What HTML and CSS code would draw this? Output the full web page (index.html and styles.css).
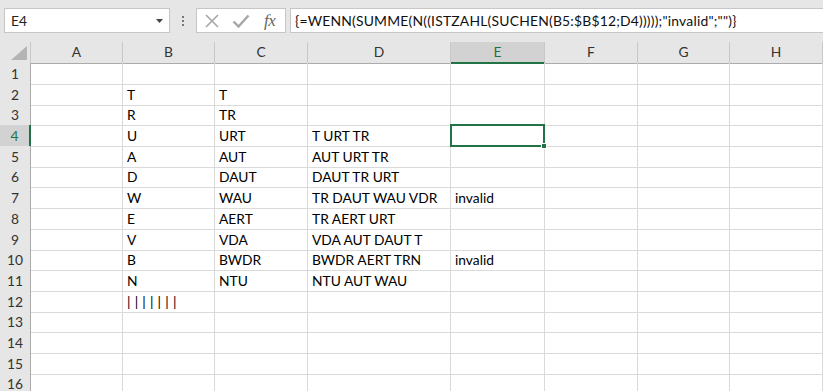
FILE: index.html
```html
<!DOCTYPE html>
<html>
<head>
<meta charset="utf-8">
<link rel="stylesheet" href="styles.css">
</head>
<body>
<div class="app">
  <div class="toolbar">
    <div class="namebox">
      <span class="name">E4</span>
      <svg class="caret" width="8" height="5" viewBox="0 0 8 5"><path d="M0 0h7L3.5 4z" fill="#444"/></svg>
    </div>
    <div class="grip"><span></span><span></span><span></span></div>
    <div class="btnbox">
      <svg class="ico" width="16" height="16" viewBox="0 0 16 16"><path d="M2 2L14 14M14 2L2 14" stroke="#a6a6a6" stroke-width="1.6" fill="none"/></svg>
      <svg class="ico" width="18" height="16" viewBox="0 0 18 16"><path d="M1.5 8.5L6.5 13.5L16.5 2.5" stroke="#a6a6a6" stroke-width="2.4" fill="none"/></svg>
      <span class="fx">fx</span>
    </div>
    <div class="formula">{=WENN(SUMME(N((ISTZAHL(SUCHEN(B5:$B$12;D4)))));"invalid";"")}</div>
  </div>

  <div class="sheet">
    <div class="row head">
      <div class="corner"><svg width="16" height="14" viewBox="0 0 16 14"><path d="M16 0V14H0z" fill="#b4b4b4"/></svg></div>
      <div class="ch">A</div><div class="ch">B</div><div class="ch">C</div><div class="ch">D</div><div class="ch sel">E</div><div class="ch">F</div><div class="ch">G</div><div class="ch">H</div>
    </div>
    <div class="row"><div class="rh">1</div><div class="c"></div><div class="c"></div><div class="c"></div><div class="c"></div><div class="c"></div><div class="c"></div><div class="c"></div><div class="c"></div></div>
    <div class="row"><div class="rh">2</div><div class="c"></div><div class="c">T</div><div class="c">T</div><div class="c"></div><div class="c"></div><div class="c"></div><div class="c"></div><div class="c"></div></div>
    <div class="row"><div class="rh">3</div><div class="c"></div><div class="c">R</div><div class="c">TR</div><div class="c"></div><div class="c"></div><div class="c"></div><div class="c"></div><div class="c"></div></div>
    <div class="row"><div class="rh sel">4</div><div class="c"></div><div class="c">U</div><div class="c">URT</div><div class="c">T URT TR</div><div class="c active"><span class="handle"></span></div><div class="c"></div><div class="c"></div><div class="c"></div></div>
    <div class="row"><div class="rh">5</div><div class="c"></div><div class="c">A</div><div class="c">AUT</div><div class="c">AUT URT TR</div><div class="c"></div><div class="c"></div><div class="c"></div><div class="c"></div></div>
    <div class="row"><div class="rh">6</div><div class="c"></div><div class="c">D</div><div class="c">DAUT</div><div class="c">DAUT TR URT</div><div class="c"></div><div class="c"></div><div class="c"></div><div class="c"></div></div>
    <div class="row"><div class="rh">7</div><div class="c"></div><div class="c">W</div><div class="c">WAU</div><div class="c">TR DAUT WAU VDR</div><div class="c">invalid</div><div class="c"></div><div class="c"></div><div class="c"></div></div>
    <div class="row"><div class="rh">8</div><div class="c"></div><div class="c">E</div><div class="c">AERT</div><div class="c">TR AERT URT</div><div class="c"></div><div class="c"></div><div class="c"></div><div class="c"></div></div>
    <div class="row"><div class="rh">9</div><div class="c"></div><div class="c">V</div><div class="c">VDA</div><div class="c">VDA AUT DAUT T</div><div class="c"></div><div class="c"></div><div class="c"></div><div class="c"></div></div>
    <div class="row"><div class="rh">10</div><div class="c"></div><div class="c">B</div><div class="c">BWDR</div><div class="c">BWDR AERT TRN</div><div class="c">invalid</div><div class="c"></div><div class="c"></div><div class="c"></div></div>
    <div class="row"><div class="rh">11</div><div class="c"></div><div class="c">N</div><div class="c">NTU</div><div class="c">NTU AUT WAU</div><div class="c"></div><div class="c"></div><div class="c"></div><div class="c"></div></div>
    <div class="row"><div class="rh">12</div><div class="c"></div><div class="c bars">|||||||</div><div class="c"></div><div class="c"></div><div class="c"></div><div class="c"></div><div class="c"></div><div class="c"></div></div>
    <div class="row"><div class="rh">13</div><div class="c"></div><div class="c"></div><div class="c"></div><div class="c"></div><div class="c"></div><div class="c"></div><div class="c"></div><div class="c"></div></div>
    <div class="row"><div class="rh">14</div><div class="c"></div><div class="c"></div><div class="c"></div><div class="c"></div><div class="c"></div><div class="c"></div><div class="c"></div><div class="c"></div></div>
    <div class="row"><div class="rh">15</div><div class="c"></div><div class="c"></div><div class="c"></div><div class="c"></div><div class="c"></div><div class="c"></div><div class="c"></div><div class="c"></div></div>
    <div class="row"><div class="rh">16</div><div class="c"></div><div class="c"></div><div class="c"></div><div class="c"></div><div class="c"></div><div class="c"></div><div class="c"></div><div class="c"></div></div>
  </div>
</div>
</body>
</html>
```

FILE: styles.css
```css
* { box-sizing: border-box; }
html, body { margin: 0; padding: 0; }
body {
  width: 823px;
  height: 391px;
  overflow: hidden;
  background: #fff;
  font-family: Lato, "Open Sans", sans-serif;
  color: #000;
}
.app { width: 823px; height: 391px; overflow: hidden; }

.toolbar {
  height: 42px;
  background: #e6e6e6;
  display: flex;
  align-items: flex-start;
  padding: 8px 0 0 4px;
  white-space: nowrap;
}
.namebox {
  width: 166px;
  height: 25px;
  background: #fff;
  border: 1px solid #c6c6c6;
  display: flex;
  align-items: center;
  justify-content: space-between;
  padding: 0 5px 0 6px;
  font-size: 13.8px;
  color: #222;
}
.caret { margin-top: 1px; }
.grip {
  width: 26px;
  height: 25px;
  display: flex;
  flex-direction: column;
  align-items: center;
  justify-content: center;
  gap: 2px;
}
.grip span { width: 2px; height: 2px; background: #777; }
.btnbox {
  width: 90px;
  height: 25px;
  background: #fff;
  border: 1px solid #c6c6c6;
  display: flex;
  align-items: center;
  padding: 0 0 0 7px;
  gap: 12px;
}
.fx {
  font-family: "Liberation Serif", serif;
  font-style: italic;
  font-size: 17px;
  color: #666;
  margin-left: 2px;
  letter-spacing: -0.5px;
}
.formula {
  margin-left: 4px;
  flex: 1;
  height: 25px;
  background: #fff;
  border: 1px solid #c6c6c6;
  border-right: none;
  padding: 0 0 0 4px;
  font-size: 13.9px;
  letter-spacing: 0.2px;
  line-height: 23px;
  color: #111;
}

.sheet { display: flex; flex-direction: column; }
.row {
  display: grid;
  grid-template-columns: 31px 92px 92px 93px 143px 94px 93px 92px 93px;
  height: 20.7px;
}
.row.head { height: 21px; background: #e6e6e6; }
.corner {
  border-right: 1px solid #c8c8c8;
  border-bottom: 1px solid #ababab;
  display: flex;
  align-items: flex-end;
  justify-content: flex-end;
  padding: 0 3px 3px 0;
}
.ch {
  border-right: 1px solid #c8c8c8;
  border-bottom: 1px solid #ababab;
  text-align: center;
  font-size: 13.8px;
  line-height: 20px;
  color: #333;
}
.ch.sel {
  background: #d2d2d2;
  color: #217346;
  border-bottom: 2px solid #217346;
}
.rh {
  background: #e6e6e6;
  border-right: 1px solid #ababab;
  border-bottom: 1px solid #d0d0d0;
  text-align: center;
  font-size: 13.8px;
  line-height: 21px;
  color: #333;
}
.rh.sel {
  background: #d2d2d2;
  color: #217346;
  border-right: 2px solid #217346;
}
.c {
  border-right: 1px solid #dadada;
  border-bottom: 1px solid #dadada;
  font-size: 13.8px;
  line-height: 21px;
  padding-left: 4px;
  white-space: nowrap;
  overflow: visible;
}
.c.active {
  position: relative;
  border: 2px solid #217346;
  margin: -1px 0 0 -1px;
  width: calc(100% + 1px);
  height: calc(100% + 1px);
}
.handle {
  position: absolute;
  right: -4px;
  bottom: -4px;
  width: 6px;
  height: 6px;
  background: #217346;
  border: 1px solid #fff;
}
.bars { letter-spacing: 4.2px; color: #000; }
```
